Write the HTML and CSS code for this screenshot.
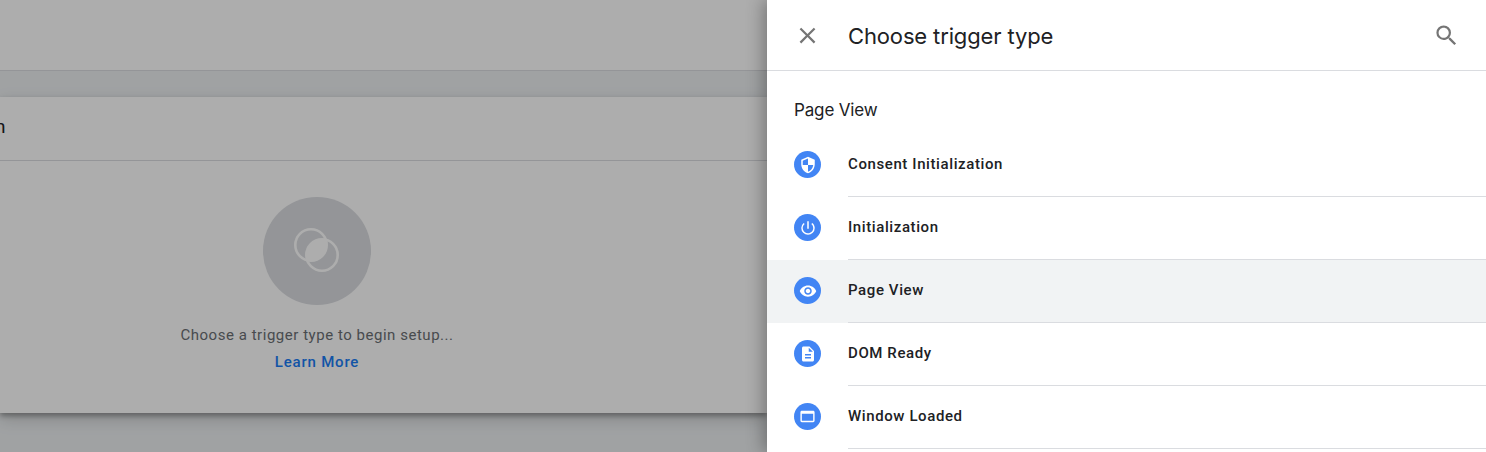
FILE: index.html
```html
<!DOCTYPE html>
<html lang="en">
<head>
<meta charset="utf-8">
<title>Choose trigger type</title>
<link rel="stylesheet" href="styles.css">
</head>
<body>
<div class="page">
  <main class="editor">
    <div class="topbar"></div>
    <section class="card">
      <div class="card-head"><span class="card-title">n</span></div>
      <div class="card-body">
        <div class="hero">
          <svg class="hero-icon" width="46" height="46" viewBox="0 0 46 46">
            <path class="hero-fill" d="M31.8 11.77A15.7 15.7 0 0 1 13.2 32.23A15.7 15.7 0 0 1 31.8 11.77z"/>
            <circle class="hero-ring" cx="17" cy="17" r="15.7"/>
            <circle class="hero-ring" cx="28" cy="27" r="15.7"/>
          </svg>
        </div>
        <p class="hint">Choose a trigger type to begin setup...</p>
        <a class="learn" href="#">Learn More</a>
      </div>
    </section>
    <div class="scrim"></div>
  </main>
  <aside class="drawer">
    <header class="drawer-head">
      <svg class="head-icon" width="27" height="27" viewBox="0 0 24 24"><path d="M19 6.41 17.59 5 12 10.59 6.41 5 5 6.41 10.59 12 5 17.59 6.41 19 12 13.41 17.59 19 19 17.59 13.41 12z"/></svg>
      <h1 class="drawer-title">Choose trigger type</h1>
      <svg class="head-icon" width="27" height="27" viewBox="0 0 24 24"><path d="M15.5 14h-.79l-.28-.27A6.47 6.47 0 0 0 16 9.5 6.5 6.5 0 1 0 9.5 16c1.61 0 3.09-.59 4.23-1.57l.27.28v.79l5 4.99L20.49 19l-4.99-5zm-6 0C7.01 14 5 11.99 5 9.5S7.01 5 9.5 5 14 7.01 14 9.5 11.99 14 9.5 14z"/></svg>
    </header>
    <h2 class="group">Page View</h2>
    <ul class="list">
      <li class="row">
        <span class="badge"><svg width="18" height="18" viewBox="0 0 24 24"><path d="M12 1 3 5v6c0 5.55 3.84 10.74 9 12 5.16-1.26 9-6.45 9-12V5l-9-4zm0 10.99h7c-.53 4.12-3.28 7.79-7 8.94V12H5V6.3l7-3.11v8.8z"/></svg></span>
        <span class="label">Consent Initialization</span>
      </li>
      <li class="row">
        <span class="badge"><svg width="18" height="18" viewBox="0 0 24 24"><path d="M13 3h-2v10h2V3zm4.83 2.17-1.42 1.42A6.92 6.92 0 0 1 19 12c0 3.87-3.13 7-7 7A6.995 6.995 0 0 1 7.58 6.58L6.17 5.17A8.932 8.932 0 0 0 3 12a9 9 0 0 0 18 0c0-2.74-1.23-5.18-3.17-6.83z"/></svg></span>
        <span class="label">Initialization</span>
      </li>
      <li class="row is-active">
        <span class="badge"><svg width="18" height="18" viewBox="0 0 24 24"><path d="M12 4.5C7 4.5 2.73 7.61 1 12c1.73 4.39 6 7.5 11 7.5s9.27-3.11 11-7.5c-1.73-4.39-6-7.5-11-7.5zM12 17c-2.76 0-5-2.24-5-5s2.24-5 5-5 5 2.24 5 5-2.24 5-5 5zm0-8c-1.66 0-3 1.34-3 3s1.34 3 3 3 3-1.34 3-3-1.34-3-3-3z"/></svg></span>
        <span class="label">Page View</span>
      </li>
      <li class="row">
        <span class="badge"><svg width="18" height="18" viewBox="0 0 24 24"><path d="M14 2H6c-1.1 0-2 .9-2 2v16c0 1.1.9 2 2 2h12c1.1 0 2-.9 2-2V8l-6-6zm2 16H8v-2h8v2zm0-4H8v-2h8v2zm-3-5V3.5L18.5 9H13z"/></svg></span>
        <span class="label">DOM Ready</span>
      </li>
      <li class="row">
        <span class="badge"><svg width="17" height="17" viewBox="0 0 24 24"><path d="M20 4H4c-1.1 0-2 .9-2 2v12c0 1.1.9 2 2 2h16c1.1 0 2-.9 2-2V6c0-1.1-.9-2-2-2zm0 14H4V8h16v10z"/></svg></span>
        <span class="label">Window Loaded</span>
      </li>
    </ul>
  </aside>
</div>
</body>
</html>
```

FILE: styles.css
```css
* { box-sizing: border-box; }
html, body { margin: 0; height: 100%; overflow: hidden; }
body { font-family: Roboto, "Liberation Sans", sans-serif; background: #fff; }

.page { display: flex; height: 452px; width: 1486px; }

/* Left editor, dimmed */
.editor { position: relative; width: 767px; flex: none; background: #eceff1; overflow: hidden; }
.topbar { height: 71px; background: #fff; border-bottom: 1px solid #dadce0; }
.card {
  margin-top: 26px;
  height: 316px;
  background: #fff;
  box-shadow: 0 3px 5px rgba(0,0,0,.3), 0 6px 16px rgba(0,0,0,.16);
}
.card-head { height: 64px; border-bottom: 1px solid #dadce0; display: flex; align-items: center; }
.card-title { font-size: 19px; color: #202124; margin-left: -5px; margin-top: -4px; }
.card-body { display: flex; flex-direction: column; align-items: center; padding: 36px 133px 0 0; }
.hero { width: 108px; height: 108px; border-radius: 50%; background: #dadce0; display: flex; align-items: center; justify-content: center; }
.hero-ring { fill: none; stroke: #fff; stroke-width: 2.6; }
.hero-fill { fill: #fff; }
.hero-icon { display: block; }
.hint { margin: 21px 0 0; font-size: 15px; line-height: 18px; letter-spacing: .53px; color: #6b6f74; }
.learn { margin-top: 9px; font-size: 15px; line-height: 18px; font-weight: 500; letter-spacing: .8px; color: #1a7cf5; text-decoration: none; }
.scrim { position: absolute; inset: 0; background: rgba(0,0,0,.32); }

/* Right drawer */
.drawer { position: relative; width: 719px; flex: none; background: #fff; box-shadow: -4px 0 16px rgba(0,0,0,.3); }
.drawer-head { height: 71px; border-bottom: 1px solid #dadce0; display: flex; align-items: center; padding: 0 26px 0 27px; }
.head-icon { fill: #757575; flex: none; display: block; }
.drawer-title { margin: 2px 0 0 27px; flex: 1; font-family: Inter, Roboto, sans-serif; font-size: 22px; font-weight: 400; letter-spacing: -.14px; color: #202124; }
.group { margin: 0; padding: 28px 0 0 27px; font-family: Inter, Roboto, sans-serif; font-size: 17px; line-height: 22px; font-weight: 400; letter-spacing: -.15px; color: #202124; }
.list { list-style: none; margin: 0; padding: 13px 0 0; }
.row { height: 63px; display: flex; align-items: center; }
.row .label { flex: 1; align-self: stretch; display: flex; align-items: center; margin-left: 27px; padding-bottom: 2px; border-bottom: 1px solid #dadce0; font-size: 15px; font-weight: 500; letter-spacing: .6px; color: #202124; }
.row.is-active { background: #f1f3f4; }
.badge { width: 27px; height: 27px; margin: 0 0 2px 27px; border-radius: 50%; background: #4285f4; display: flex; align-items: center; justify-content: center; flex: none; }
.badge svg { fill: #fff; display: block; }
```
